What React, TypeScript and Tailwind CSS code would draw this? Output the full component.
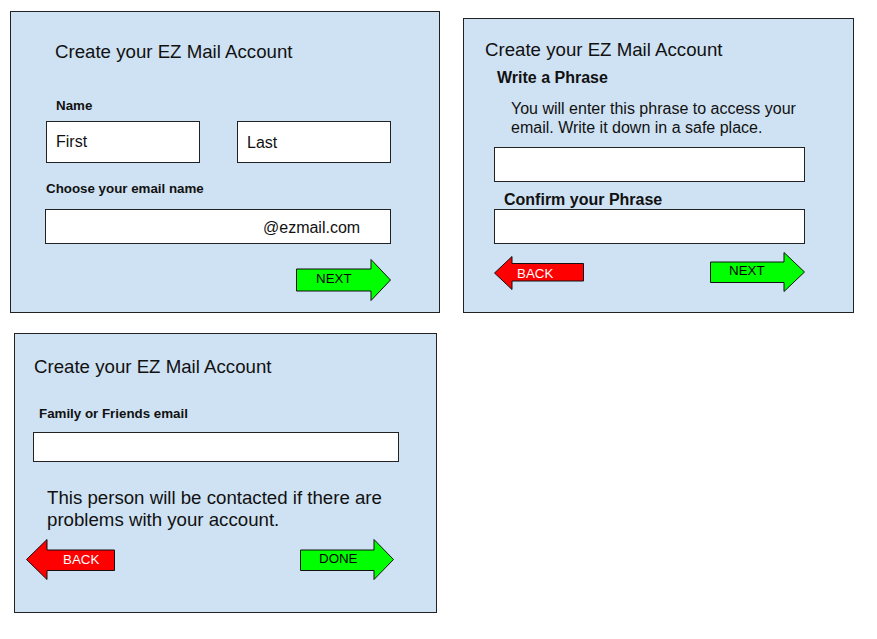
type ArrowProps = {
  dir: 'left' | 'right'
  w: number
  h: number
  bodyTop: number
  bodyBottom: number
  headX: number
  fill: string
  label: string
  sizeClass: string
  textClass: string
}

function Arrow({ dir, w, h, bodyTop, bodyBottom, headX, fill, label, sizeClass, textClass }: ArrowProps) {
  const mid = h / 2
  const points =
    dir === 'right'
      ? [
          [0.5, bodyTop],
          [headX, bodyTop],
          [headX, 0.5],
          [w - 0.5, mid],
          [headX, h - 0.5],
          [headX, bodyBottom],
          [0.5, bodyBottom],
        ]
      : [
          [w - 0.5, bodyTop],
          [headX, bodyTop],
          [headX, 0.5],
          [0.5, mid],
          [headX, h - 0.5],
          [headX, bodyBottom],
          [w - 0.5, bodyBottom],
        ]

  return (
    <div className={`relative shrink-0 ${sizeClass}`}>
      <svg className="absolute inset-0" width={w} height={h} viewBox={`0 0 ${w} ${h}`}>
        <polygon
          points={points.map((p) => p.join(',')).join(' ')}
          fill={fill}
          stroke="#111"
          strokeWidth={1}
        />
      </svg>
      <span className={`relative block text-[13.33px] leading-[16px] ${textClass}`}>{label}</span>
    </div>
  )
}

function Title({ className }: { className: string }) {
  return (
    <h1 className={`text-[18.67px] leading-[22px] ${className}`}>Create your EZ Mail Account</h1>
  )
}

function FirstStep() {
  return (
    <section className="ml-[10px] mt-[11px] h-[302px] w-[430px] shrink-0 border border-[#222] bg-[#cfe2f3]">
      <Title className="pl-[44px] pt-[29px]" />
      <p className="ml-[45px] mt-[35px] text-[13.33px] font-bold leading-[16px]">Name</p>
      <div className="ml-[35px] mt-[7px] flex gap-[37px]">
        <div className="h-[42px] w-[154px] border border-[#222] bg-white pl-[9px] pt-[10px] text-[16px] leading-[19px]">
          First
        </div>
        <div className="h-[42px] w-[154px] border border-[#222] bg-white pl-[9px] pt-[11px] text-[16px] leading-[19px]">
          Last
        </div>
      </div>
      <p className="ml-[35px] mt-[18px] text-[13.33px] font-bold leading-[16px]">
        Choose your email name
      </p>
      <div className="ml-[34px] mt-[12px] h-[35px] w-[346px] border border-[#222] bg-white pl-[217px] pt-[8px] text-[16px] leading-[19px]">
        @ezmail.com
      </div>
      <div className="ml-[285px] mt-[15px] flex">
        <Arrow
          dir="right"
          w={95}
          h={42}
          bodyTop={10}
          bodyBottom={32}
          headX={75}
          fill="#00ff00"
          label="NEXT"
          sizeClass="h-[42px] w-[95px]"
          textClass="pl-[20px] pt-[12px] text-black"
        />
      </div>
    </section>
  )
}

function PhraseStep() {
  return (
    <section className="ml-[23px] mt-[18px] h-[295px] w-[391px] shrink-0 border border-[#222] bg-[#cfe2f3]">
      <Title className="pl-[21px] pt-[20px]" />
      <p className="ml-[33px] mt-[7px] text-[16px] font-bold leading-[19px]">Write a Phrase</p>
      <p className="ml-[47px] mt-[13px] w-[300px] text-[16px] leading-[18.7px]">
        You will enter this phrase to access your email. Write it down in a safe place.
      </p>
      <div className="ml-[30px] mt-[10px] h-[35px] w-[311px] border border-[#222] bg-white" />
      <p className="ml-[40px] mt-[9px] text-[16px] font-bold leading-[18px]">Confirm your Phrase</p>
      <div className="ml-[30px] h-[35px] w-[311px] border border-[#222] bg-white" />
      <div className="ml-[30px] mt-[8px] flex items-start">
        <div className="mt-[4px]">
          <Arrow
            dir="left"
            w={90}
            h={34}
            bodyTop={7.5}
            bodyBottom={25}
            headX={18}
            fill="#ff0000"
            label="BACK"
            sizeClass="h-[34px] w-[90px]"
            textClass="pl-[23px] pt-[10px] text-white"
          />
        </div>
        <div className="ml-[126px]">
          <Arrow
            dir="right"
            w={95}
            h={40}
            bodyTop={10}
            bodyBottom={30.5}
            headX={74}
            fill="#00ff00"
            label="NEXT"
            sizeClass="h-[40px] w-[95px]"
            textClass="pl-[19px] pt-[11px] text-black"
          />
        </div>
      </div>
    </section>
  )
}

function ContactStep() {
  return (
    <section className="ml-[14px] mt-[20px] h-[280px] w-[423px] border border-[#222] bg-[#cfe2f3]">
      <Title className="pl-[19px] pt-[22px]" />
      <p className="ml-[24px] mt-[28px] text-[13.33px] font-bold leading-[16px]">
        Family or Friends email
      </p>
      <div className="ml-[18px] mt-[10px] h-[30px] w-[366px] border border-[#222] bg-white" />
      <p className="ml-[32px] mt-[25px] w-[345px] text-[18.67px] leading-[21.7px]">
        This person will be contacted if there are problems with your account.
      </p>
      <div className="ml-[11px] mt-[9px] flex items-start">
        <Arrow
          dir="left"
          w={89}
          h={41}
          bodyTop={11}
          bodyBottom={31.5}
          headX={21}
          fill="#ff0000"
          label="BACK"
          sizeClass="h-[41px] w-[89px]"
          textClass="pl-[37px] pt-[13px] text-white"
        />
        <div className="ml-[185px]">
          <Arrow
            dir="right"
            w={94}
            h={41}
            bodyTop={11}
            bodyBottom={31.5}
            headX={74}
            fill="#00ff00"
            label="DONE"
            sizeClass="h-[41px] w-[94px]"
            textClass="pl-[19px] pt-[12px] text-black"
          />
        </div>
      </div>
    </section>
  )
}

export default function App() {
  return (
    <div className="min-h-screen bg-white font-['Liberation_Sans',Arial,sans-serif] text-[#111]">
      <div className="flex items-start">
        <FirstStep />
        <PhraseStep />
      </div>
      <ContactStep />
    </div>
  )
}
